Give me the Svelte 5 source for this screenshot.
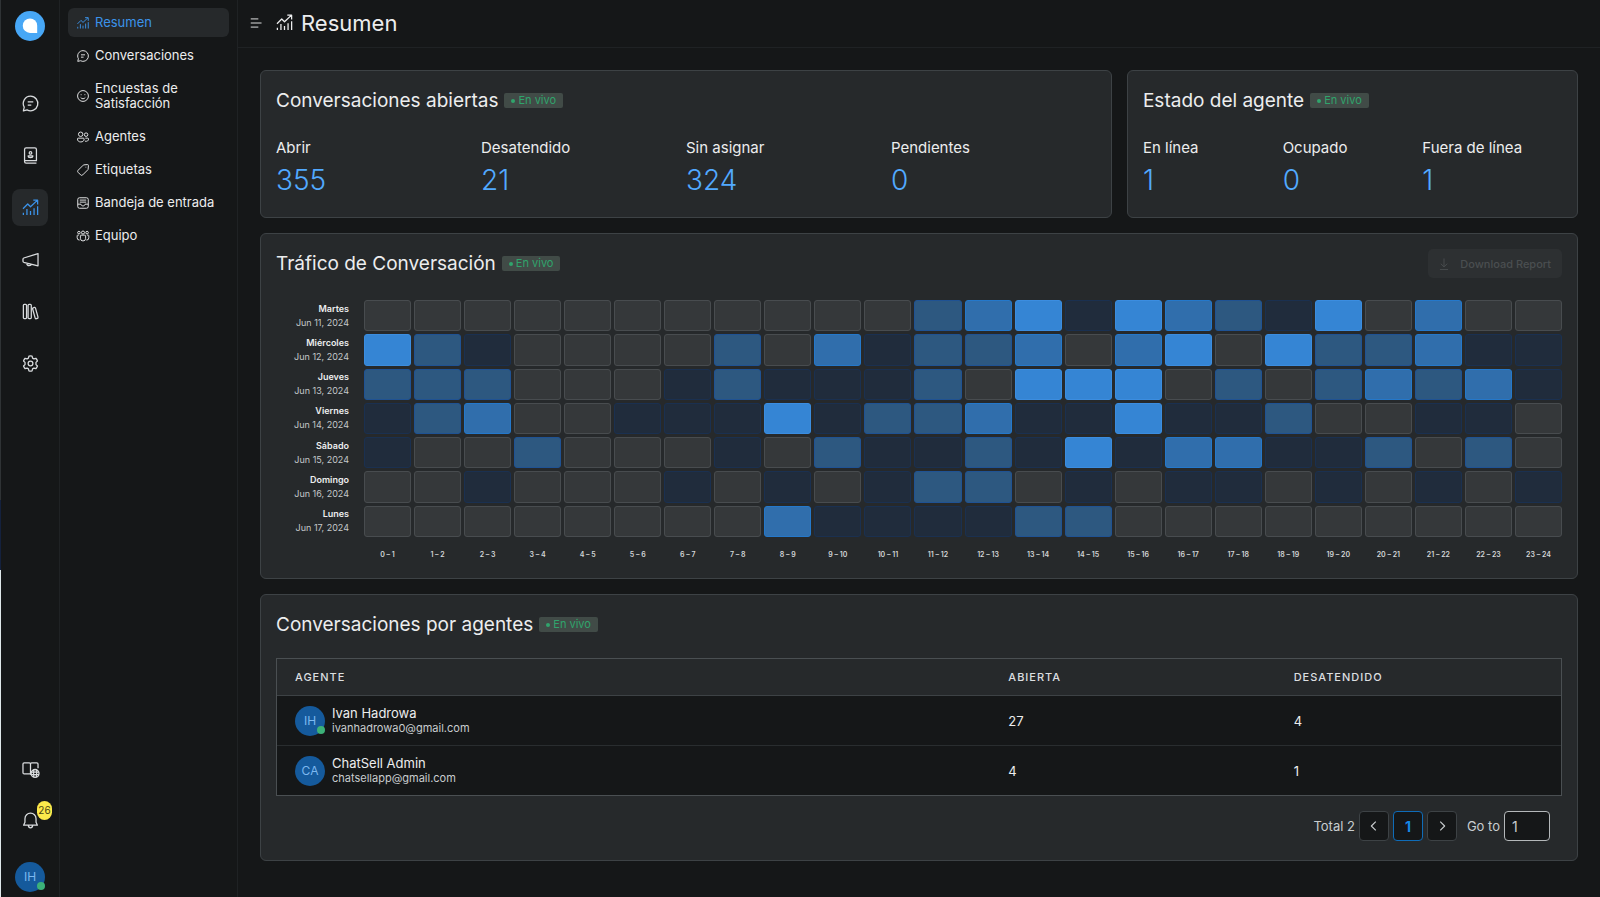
<script>
    // Icon shapes, all drawn on a 24x24 grid
    const icons = {
        chat: 'M12 2.8a9.2 9.2 0 1 1-4.3 17.3L3 21.2l1.1-4.6A9.2 9.2 0 0 1 12 2.8ZM8.5 10h7M8.5 14h4.5',
        contacts: 'M4.5 19V4.5a2 2 0 0 1 2-2h11a2 2 0 0 1 2 2V18.5h-15M4.5 18.5v1a2 2 0 0 0 2 2h13M12 7.2a1.6 1.6 0 1 1 0 3.2 1.6 1.6 0 0 1 0-3.2ZM9 12.4h6c0 1.6-1.2 2.4-3 2.4s-3-.8-3-2.4Z',
        report: 'M2.5 13.5 8.5 7.5l3.5 3.5 8.5-8M15.5 2.800h5.500v5.500M3 18.500v3M7.500 14v7.500M12 16.500v5M16.500 13v8.500M21 10.500v11',
        megaphone: 'M21.5 4.5v15.5L3.5 15.5a1.5 1.5 0 0 1-1-1.4v-2.6c0-.7.4-1.2 1-1.4ZM7 16.5c.3 2 1.7 3.2 3.3 3.2 1.500 0 2.800-.8 3.200-1.900',
        library: 'M4.2 3h1.6A1.2 1.2 0 0 1 7 4.2v15.6A1.2 1.2 0 0 1 5.8 21H4.2A1.2 1.2 0 0 1 3 19.8V4.2A1.2 1.2 0 0 1 4.2 3ZM10.2 3h1.6A1.2 1.2 0 0 1 13 4.2v15.6a1.2 1.2 0 0 1-1.2 1.2h-1.6A1.2 1.2 0 0 1 9 19.8V4.2A1.2 1.2 0 0 1 10.2 3ZM15.5 7.3l1.3-.4a1.2 1.2 0 0 1 1.5.8l3.2 11.5a1.2 1.2 0 0 1-.8 1.5l-1.3.4a1.2 1.2 0 0 1-1.5-.8L14.7 8.8a1.2 1.2 0 0 1 .8-1.5Z',
        gear: 'M12 9a3 3 0 1 1 0 6 3 3 0 0 1 0-6ZM10 2.7q2-.4 4 0l.6 2.5 1.7 1 2.5-.8q1.3 1.5 2 3.4l-1.9 1.8v2.8l1.9 1.8q-.7 1.9-2 3.4l-2.5-.8-1.7 1-.6 2.5q-2 .4-4 0l-.6-2.5-1.7-1-2.5.8q-1.3-1.5-2-3.4l1.9-1.8v-2.8L3.2 8.800q.7-1.900 2-3.400l2.500.8 1.700-1Z',
        docs: 'M12 17.5H4a1.5 1.5 0 0 1-1.5-1.5V5A1.5 1.5 0 0 1 4 3.5h6.5A1.5 1.5 0 0 1 12 5v13ZM12 5a1.5 1.5 0 0 1 1.5-1.5H20A1.5 1.5 0 0 1 21.5 5v5.5M17.8 12a5 5 0 1 1 0 10 5 5 0 0 1 0-10ZM12.8 15.4h10M12.8 18.6h10M16.3 12.5q-1.2 4.5 0 9M19.3 12.5q1.2 4.5 0 9',
        bell: 'M12 2.7a7 7 0 0 1 7 7v4.500l1.700 3.700H3.300L5 14.200V9.700a7 7 0 0 1 7-7ZM9.200 18.200c.2 1.900 1.300 3 2.800 3s2.600-1.100 2.800-3',
        smile: 'M12 2.7a9.3 9.3 0 1 1 0 18.6 9.3 9.3 0 0 1 0-18.6ZM8 14.5c2 3 6 3 8 0M8.8 9v1.6M15.2 9v1.6',
        people: 'M8 3.5a3.8 3.8 0 1 1 0 7.6 3.8 3.8 0 0 1 0-7.6ZM17.3 5a3 3 0 1 1 0 6 3 3 0 0 1 0-6ZM4 14h8.5a1.5 1.5 0 0 1 1.5 1.5c0 3-2.3 5-5.8 5s-5.7-2-5.7-5A1.5 1.5 0 0 1 4 14ZM16 14h4.2a1.5 1.5 0 0 1 1.3 1.5c0 3-2.3 4.3-6 3.7',
        tag: 'M13.5 3.2 19.5 2.7a1.7 1.7 0 0 1 1.8 1.8l-.5 6q0 .6-.5 1.1l-8.8 8.8a2.5 2.5 0 0 1-3.5 0l-4.4-4.4a2.5 2.5 0 0 1 0-3.5l8.800-8.800q.5-.5 1.100-.5ZM16.900 6.500v1.200',
        inbox: 'M6 3h12a3 3 0 0 1 3 3v12a3 3 0 0 1-3 3H6a3 3 0 0 1-3-3V6a3 3 0 0 1 3-3ZM3 14h5.5c.3 2 1.6 3 3.5 3s3.2-1 3.5-3H21M6.5 7h11M6.5 10.5h11',
        team: 'M12 3.5a2.6 2.6 0 1 1 0 5.2 2.6 2.6 0 0 1 0-5.2ZM5 4a2.2 2.2 0 1 1 0 4.4A2.2 2.2 0 0 1 5 4ZM19 4a2.2 2.2 0 1 1 0 4.4A2.2 2.2 0 0 1 19 4ZM8.5 10.5h7a1 1 0 0 1 1 1V16a4.5 4.5 0 0 1-9 0v-4.5a1 1 0 0 1 1-1ZM5 10.5H3a1 1 0 0 0-1 1V15a4 4 0 0 0 4.2 4M19 10.5h2a1 1 0 0 1 1 1V15a4 4 0 0 1-4.200 4',
        menu: 'M3 5h13M3 12h18.5M3 19h13',
        download: 'M12 2.5v14M6.5 11.5 12 17l5.5-5.5M5 21.5h14',
        left: 'M15 4.5 7.5 12l7.5 7.5',
        right: 'M9 4.5 16.5 12 9 19.5'
    };

    const railItems = [
        { icon: 'chat', label: 'Conversaciones' },
        { icon: 'contacts', label: 'Contactos' },
        { icon: 'report', label: 'Informes' },
        { icon: 'megaphone', label: 'Campañas' },
        { icon: 'library', label: 'Centro de ayuda' },
        { icon: 'gear', label: 'Ajustes' }
    ];
    let activeRail = $state('report');

    const menuItems = [
        { icon: 'report', label: 'Resumen' },
        { icon: 'chat', label: 'Conversaciones' },
        { icon: 'smile', label: 'Encuestas de Satisfacción' },
        { icon: 'people', label: 'Agentes' },
        { icon: 'tag', label: 'Etiquetas' },
        { icon: 'inbox', label: 'Bandeja de entrada' },
        { icon: 'team', label: 'Equipo' }
    ];
    let activeMenu = $state('Resumen');

    const conversationMetrics = [
        { name: 'Abrir', value: 355 },
        { name: 'Desatendido', value: 21 },
        { name: 'Sin asignar', value: 324 },
        { name: 'Pendientes', value: 0 }
    ];
    const agentMetrics = [
        { name: 'En línea', value: 1 },
        { name: 'Ocupado', value: 0 },
        { name: 'Fuera de línea', value: 1 }
    ];

    // One digit per hour: 0 is no traffic, 4 is the busiest
    const traffic = [
        { day: 'Martes', date: 'Jun 11, 2024', levels: '000000000002341432140300' },
        { day: 'Miércoles', date: 'Jun 12, 2024', levels: '421000020312230340422311' },
        { day: 'Jueves', date: 'Jun 13, 2024', levels: '222000121112044402023231' },
        { day: 'Viernes', date: 'Jun 14, 2024', levels: '123001114122311411200110' },
        { day: 'Sábado', date: 'Jun 15, 2024', levels: '100200010211214133112020' },
        { day: 'Domingo', date: 'Jun 16, 2024', levels: '001000101012201011010101' },
        { day: 'Lunes', date: 'Jun 17, 2024', levels: '000000003111122000000000' }
    ];
    const hours = Array.from({ length: 24 }, (_, i) => `${i} – ${i + 1}`);

    const agents = [
        { initials: 'IH', name: 'Ivan Hadrowa', email: 'ivanhadrowa0@gmail.com', open: 27, unattended: 4, online: true },
        { initials: 'CA', name: 'ChatSell Admin', email: 'chatsellapp@gmail.com', open: 4, unattended: 1, online: false }
    ];

    let page = $state('1');
</script>

{#snippet icon(name)}
    <svg class="icon" viewBox="0 0 24 24" aria-hidden="true"><path d={icons[name]} /></svg>
{/snippet}

{#snippet cardTitle(title)}
    <div class="card-title">
        <h2>{title}</h2>
        <span class="live"><i></i>En vivo</span>
    </div>
{/snippet}

{#snippet metrics(items)}
    <div class="metrics">
        {#each items as item}
            <div class="metric">
                <h3>{item.name}</h3>
                <p>{item.value}</p>
            </div>
        {/each}
    </div>
{/snippet}

<div class="app">
    <nav class="rail">
        <a class="logo" href="#home" aria-label="Inicio">
            <svg viewBox="0 0 30 30"><circle cx="15" cy="15" r="15" /><path d="M15 7.500a7.200 7.200 0 0 1 7.200 7.200v7.200H15a7.200 7.200 0 0 1 0-14.400Z" /></svg>
        </a>
        <div class="rail-links">
            {#each railItems as item}
                <a class="rail-link" class:active={activeRail === item.icon} href="#{item.icon}" aria-label={item.label} onclick={() => (activeRail = item.icon)}>
                    {@render icon(item.icon)}
                </a>
            {/each}
        </div>
        <div class="rail-bottom">
            <a class="rail-link" href="#docs" aria-label="Documentación">{@render icon('docs')}</a>
            <button class="rail-link bell" aria-label="Notificaciones">
                {@render icon('bell')}
                <span class="count">26</span>
            </button>
            <button class="avatar online" aria-label="Perfil">IH</button>
        </div>
    </nav>

    <nav class="sidebar">
        <ul>
            {#each menuItems as item}
                <li>
                    <a class:active={activeMenu === item.label} href="#{item.icon}" onclick={() => (activeMenu = item.label)}>
                        {@render icon(item.icon)}
                        <span>{item.label}</span>
                    </a>
                </li>
            {/each}
        </ul>
    </nav>

    <main>
        <header>
            <button class="toggle" aria-label="Menú">{@render icon('menu')}</button>
            {@render icon('report')}
            <h1>Resumen</h1>
        </header>

        <div class="content">
            <div class="top">
                <section class="card">
                    {@render cardTitle('Conversaciones abiertas')}
                    {@render metrics(conversationMetrics)}
                </section>
                <section class="card">
                    {@render cardTitle('Estado del agente')}
                    {@render metrics(agentMetrics)}
                </section>
            </div>

            <section class="card">
                <div class="card-head">
                    {@render cardTitle('Tráfico de Conversación')}
                    <button class="download" disabled>{@render icon('download')}Download Report</button>
                </div>
                <div class="heatmap">
                    <div class="days">
                        {#each traffic as row}
                            <div><b>{row.day}</b><span>{row.date}</span></div>
                        {/each}
                    </div>
                    <div class="cells">
                        {#each traffic as row}
                            {#each row.levels as level}
                                <div class="cell l{level}"></div>
                            {/each}
                        {/each}
                    </div>
                    <div class="hours">
                        {#each hours as hour}
                            <span>{hour}</span>
                        {/each}
                    </div>
                </div>
            </section>

            <section class="card">
                {@render cardTitle('Conversaciones por agentes')}
                <table>
                    <colgroup>
                        <col class="wide" />
                        <col class="narrow" />
                        <col class="narrow" />
                    </colgroup>
                    <thead>
                        <tr><th>Agente</th><th>Abierta</th><th>Desatendido</th></tr>
                    </thead>
                    <tbody>
                        {#each agents as agent}
                            <tr>
                                <td>
                                    <div class="agent">
                                        <span class="avatar" class:online={agent.online}>{agent.initials}</span>
                                        <div>
                                            <h4>{agent.name}</h4>
                                            <p>{agent.email}</p>
                                        </div>
                                    </div>
                                </td>
                                <td>{agent.open}</td>
                                <td>{agent.unattended}</td>
                            </tr>
                        {/each}
                    </tbody>
                </table>
                <div class="pagination">
                    <span>Total {agents.length}</span>
                    <button aria-label="Anterior">{@render icon('left')}</button>
                    <button class="current">1</button>
                    <button aria-label="Siguiente">{@render icon('right')}</button>
                    <label for="page">Go to</label>
                    <input id="page" type="text" bind:value={page} />
                </div>
            </section>
        </div>
    </main>
</div>

<style>
    :global(body) {
        background: #151718;
    }

    .app {
        display: flex;
        min-height: 100vh;
        box-sizing: border-box;
        padding-left: 1px;
        background: linear-gradient(#2f3335 0 500px, #14213d 500px 570px, #dfe8ea 570px) left / 1px 100% no-repeat #151718;
        color: #ecedee;
        font-family: Inter, "Open Sans", sans-serif;
        font-size: 13px;
    }

    h1, h2, h3, h4, p, ul {
        margin: 0;
        padding: 0;
        font-weight: 400;
    }

    ul {
        list-style: none;
    }

    a {
        color: inherit;
        text-decoration: none;
    }

    button, input {
        font-family: inherit;
        color: inherit;
        cursor: pointer;
    }

    .icon {
        flex: none;
        width: 19px;
        height: 19px;
        fill: none;
        stroke: currentColor;
        stroke-width: 1.6;
        stroke-linejoin: round;
    }

    .rail {
        display: flex;
        flex-direction: column;
        align-items: center;
        flex: none;
        width: 58px;
        border-right: 1px solid #1f2224;
        padding-top: 11px;
    }

    .logo, .logo svg {
        display: block;
        width: 30px;
        height: 30px;
    }

    .logo circle {
        fill: #47a7f6;
    }

    .logo path {
        fill: #fff;
    }

    .rail-links {
        display: flex;
        flex-direction: column;
        gap: 15px;
        margin-top: 44px;
    }

    .rail-link {
        display: flex;
        align-items: center;
        justify-content: center;
        width: 36px;
        height: 37px;
        border: none;
        border-radius: 8px;
        padding: 0;
        background: none;
        color: #d9dcde;
    }

    .rail-link.active {
        background: #26292b;
        color: #3b93ea;
    }

    .rail-bottom {
        display: flex;
        flex-direction: column;
        align-items: center;
        gap: 14px;
        margin-top: auto;
        padding-bottom: 5px;
    }

    .bell {
        position: relative;
        margin-bottom: 9px;
    }

    .count {
        position: absolute;
        top: -1px;
        right: -4px;
        width: 15px;
        height: 19px;
        border-radius: 8px;
        background: #fbe94b;
        color: #4a4413;
        font-size: 10px;
        line-height: 19px;
        text-align: center;
    }

    .avatar {
        position: relative;
        display: block;
        flex: none;
        width: 30px;
        height: 30px;
        border: none;
        border-radius: 50%;
        padding: 0;
        background: #155a9c;
        color: #7cb8f0;
        font-size: 12px;
        line-height: 30px;
        text-align: center;
    }

    .avatar.online::after {
        content: "";
        position: absolute;
        right: 0;
        bottom: 2px;
        width: 8px;
        height: 8px;
        border-radius: 50%;
        background: #3cb179;
    }

    .sidebar {
        flex: none;
        width: 177px;
        border-right: 1px solid #1f2224;
    }

    .sidebar ul {
        display: flex;
        flex-direction: column;
        gap: 4px;
        padding: 8px;
    }

    .sidebar a {
        display: flex;
        align-items: center;
        gap: 5px;
        border-radius: 6px;
        padding: 7px 7px 7px 8px;
        line-height: 15px;
    }

    .sidebar a.active {
        background: #26292b;
        color: #3b93ea;
    }

    .sidebar .icon {
        width: 14px;
        height: 14px;
    }

    main {
        flex: 1;
        min-width: 0;
    }

    header {
        display: flex;
        align-items: center;
        height: 48px;
        box-sizing: border-box;
        border-bottom: 1px solid #1f2224;
        padding: 0 11px 2px;
    }

    h1 {
        margin-left: 7px;
        font-size: 22px;
    }

    .toggle {
        display: flex;
        margin-right: 12px;
        border: none;
        padding: 0;
        background: none;
    }

    .toggle .icon {
        width: 14px;
        height: 14px;
    }

    .content {
        display: flex;
        flex-direction: column;
        gap: 15px;
        padding: 22px;
    }

    .top {
        display: grid;
        grid-template-columns: 17fr 9fr;
        gap: 15px;
    }

    .card {
        border: 1px solid #3d4245;
        border-radius: 6px;
        padding: 15px;
        background: #26292b;
    }

    .card-head {
        display: flex;
        justify-content: space-between;
    }

    .card-title {
        display: flex;
        align-items: center;
        gap: 6px;
        height: 29px;
    }

    h2 {
        font-size: 19px;
    }

    .live {
        display: flex;
        align-items: center;
        gap: 3px;
        border-radius: 2px;
        padding: 0 7px;
        background: #414b47;
        color: #30a46c;
        font-size: 11px;
        line-height: 15px;
    }

    .live i {
        width: 4px;
        height: 4px;
        border-radius: 50%;
        background: #30a46c;
    }

    .metrics {
        display: flex;
        margin-top: 23px;
        margin-bottom: 4px;
    }

    .metric {
        flex: 1;
    }

    h3 {
        font-size: 15px;
        line-height: 20px;
    }

    .metric p {
        margin-top: 4px;
        color: #52a9ff;
        font-size: 28px;
        font-weight: 300;
        line-height: 36px;
    }

    .download {
        display: flex;
        align-items: center;
        gap: 9px;
        height: 29px;
        border: none;
        border-radius: 5px;
        padding: 0 11px 0 9px;
        background: #2d3032;
        color: #4a4e50;
        font-size: 11px;
        font-weight: 500;
    }

    .download .icon {
        width: 14px;
        height: 14px;
    }

    .heatmap {
        display: grid;
        grid-template-columns: 73px 1fr;
        column-gap: 15px;
        margin-top: 22px;
    }

    .days, .cells {
        display: grid;
        grid-template-rows: repeat(7, 1fr);
        gap: 3px;
        height: 237px;
    }

    .days div {
        display: flex;
        flex-direction: column;
        justify-content: center;
        font-size: 9px;
        line-height: 14px;
        text-align: right;
    }

    .days b {
        font-weight: 600;
    }

    .days span {
        color: #c4c8ca;
    }

    .cells, .hours {
        grid-template-columns: repeat(24, 1fr);
    }

    .cell {
        border: 1px solid #484c4f;
        border-radius: 3px;
        background: #35383a;
    }

    .l1 {
        border-color: #1a3050;
        background: #202c3c;
    }

    .l2 {
        border-color: #1f5293;
        background: #2d5880;
    }

    .l3 {
        border-color: #2478cb;
        background: #306eac;
    }

    .l4 {
        border-color: #3b8de0;
        background: #3585d4;
    }

    .hours {
        display: grid;
        grid-column: 2;
        column-gap: 3px;
        margin-top: 10px;
        margin-bottom: 1px;
        color: #d3d6d8;
        font-size: 7px;
        font-weight: 600;
        line-height: 15px;
        text-align: center;
        white-space: nowrap;
    }

    table {
        width: 100%;
        margin-top: 19px;
        border: 1px solid #4a4f52;
        border-spacing: 0;
        table-layout: fixed;
    }

    .wide {
        width: 50%;
    }

    .narrow {
        width: 20%;
    }

    th {
        height: 36px;
        border-bottom: 1px solid #3d4245;
        padding: 0 18px;
        font-size: 11px;
        font-weight: 500;
        letter-spacing: 1px;
        text-align: left;
        text-transform: uppercase;
        color: #dcdfe0;
    }

    td {
        height: 49px;
        border-bottom: 1px solid #292d2f;
        padding: 0 18px;
        background: #151718;
    }

    tr:last-child td {
        border-bottom: none;
    }

    .agent {
        display: flex;
        align-items: center;
        gap: 7px;
    }

    h4 {
        font-size: 13px;
        line-height: 16px;
    }

    .agent p {
        color: #c9cdcf;
        font-size: 11px;
        line-height: 15px;
    }

    .pagination {
        display: flex;
        align-items: center;
        justify-content: flex-end;
        gap: 4px;
        margin-top: 15px;
        padding-right: 12px;
        padding-bottom: 4px;
        color: #c9cdcf;
    }

    .pagination button {
        display: flex;
        align-items: center;
        justify-content: center;
        width: 30px;
        height: 30px;
        box-sizing: border-box;
        border: 1px solid #3d4245;
        border-radius: 4px;
        padding: 0;
        background: #151718;
        font-size: 14px;
    }

    .pagination .icon {
        width: 14px;
        height: 14px;
        stroke-width: 2;
    }

    .pagination .current {
        border-color: #0f6cb8;
        color: #1588e8;
        font-weight: 700;
    }

    .pagination label {
        margin-left: 6px;
    }

    .pagination input {
        width: 46px;
        height: 30px;
        box-sizing: border-box;
        border: 1px solid #b4b8ba;
        border-radius: 4px;
        padding: 0 7px;
        background: #151718;
        font-size: 14px;
    }
</style>
